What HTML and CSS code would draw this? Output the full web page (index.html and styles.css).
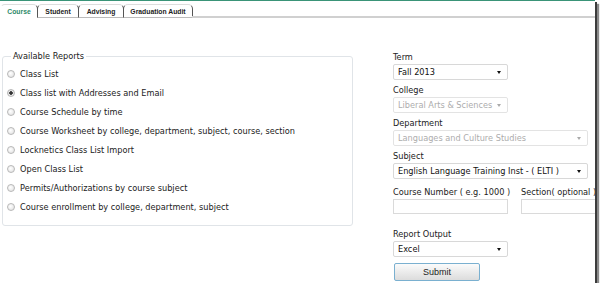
FILE: index.html
```html
<!DOCTYPE html>
<html lang="en">
<head>
    <meta charset="UTF-8">
    <title>Course Reports</title>
    <link rel="stylesheet" href="styles.css">
</head>
<body>
    <div class="frame">
        <div class="tabs">
            <div class="tab active course">Course</div>
            <div class="tab student">Student</div>
            <div class="tab advising">Advising</div>
            <div class="tab audit">Graduation Audit</div>
            <div class="tab-rest"></div>
        </div>

        <div class="content">
            <fieldset class="reports">
                <legend>Available Reports</legend>
                <label class="option"><input type="radio" name="report"> Class List</label>
                <label class="option"><input type="radio" name="report" checked> Class list with Addresses and Email</label>
                <label class="option"><input type="radio" name="report"> Course Schedule by time</label>
                <label class="option"><input type="radio" name="report"> Course Worksheet by college, department, subject, course, section</label>
                <label class="option"><input type="radio" name="report"> Locknetics Class List Import</label>
                <label class="option"><input type="radio" name="report"> Open Class List</label>
                <label class="option"><input type="radio" name="report"> Permits/Authorizations by course subject</label>
                <label class="option"><input type="radio" name="report"> Course enrollment by college, department, subject</label>
            </fieldset>

            <div class="filters">
                <div class="field">
                    <label>Term</label>
                    <span class="select short"><select><option>Fall 2013</option></select></span>
                </div>
                <div class="field">
                    <label>College</label>
                    <span class="select short disabled"><select disabled><option>Liberal Arts &amp; Sciences</option></select></span>
                </div>
                <div class="field">
                    <label>Department</label>
                    <span class="select wide disabled"><select disabled><option>Languages and Culture Studies</option></select></span>
                </div>
                <div class="field">
                    <label>Subject</label>
                    <span class="select wide"><select><option>English Language Training Inst - ( ELTI )</option></select></span>
                </div>
                <div class="field pair">
                    <div class="half">
                        <label>Course Number ( e.g. 1000 )</label>
                        <input type="text" class="text">
                    </div>
                    <div class="half">
                        <label>Section( optional )</label>
                        <input type="text" class="text">
                    </div>
                </div>
                <div class="field output">
                    <label>Report Output</label>
                    <span class="select short"><select><option>Excel</option></select></span>
                </div>
                <button class="submit">Submit</button>
            </div>
        </div>
    </div>
</body>
</html>
```

FILE: styles.css
```css
body {
    margin: 0;
    background: #fff;
    font-family: "DejaVu Sans", Verdana, sans-serif;
    font-size: 8.2px;
    color: #222;
}
.frame {
    width: 595px;
    height: 283px;
    overflow: hidden;
    background: #fff;
    border-top: 1px solid #3a9478;
    box-sizing: border-box;
    box-shadow: 2px 2px 0 #3c3c3c, 4px 4px 1px #8a8a8a;
}
.tabs {
    display: flex;
    align-items: flex-end;
    height: 17px;
    padding-top: 2px;
    box-sizing: border-box;
}
.tab {
    height: 14px;
    line-height: 14px;
    text-align: center;
    font-family: "Liberation Sans", Arial, sans-serif;
    font-weight: bold;
    font-size: 6.8px;
    color: #222;
    border: 1px solid #555;
    border-bottom: 1px solid #bbb;
    border-top-color: #ddd;
    border-radius: 5px 5px 0 0;
    margin-right: -1px;
    box-sizing: border-box;
    flex-shrink: 0;
}
.tab.course { width: 38px; }
.tab.student { width: 42px; }
.tab.advising { width: 46px; }
.tab.audit { width: 70px; }
.tab.active {
    color: #2e8a68;
    border-left-color: #fff;
    border-bottom-color: #fff;
}
.tab-rest {
    flex: 1;
    border-bottom: 2px solid #d0d0d0;
}
.content {
    display: flex;
    align-items: flex-start;
    padding: 27px 0 0 2px;
}
.reports {
    flex-shrink: 0;
    width: 351px;
    height: 175px;
    margin: 6px 0 0 0;
    padding: 3px 0 0 4px;
    border: 1px solid #e0e4e8;
    border-radius: 3px;
    box-sizing: border-box;
}
.reports legend {
    padding: 0 2px;
    margin-left: 4px;
    color: #222;
}
.option {
    display: flex;
    align-items: center;
    height: 19px;
    gap: 5px;
}
.option input {
    appearance: none;
    width: 8px;
    height: 8px;
    margin: 0;
    border: 1px solid #b8b8b8;
    border-radius: 50%;
    background: radial-gradient(circle at 40% 40%, #fff, #ddd);
    box-sizing: border-box;
}
.option input:checked {
    background: radial-gradient(circle, #333 0, #333 1.5px, #eee 2px, #ccc 100%);
}
.filters {
    flex-shrink: 0;
    margin: 7px 0 0 40px;
    display: flex;
    flex-direction: column;
}
.field {
    margin-bottom: 5px;
}
.field label {
    display: block;
    line-height: 11px;
    margin-bottom: 1px;
    white-space: nowrap;
    color: #222;
}
.select {
    position: relative;
    display: block;
    height: 16px;
}
.select.short { width: 115px; }
.select.wide { width: 195px; }
.select select {
    appearance: none;
    width: 100%;
    height: 16px;
    margin: 0;
    padding: 0 4px;
    border: 1px solid #d8d8d8;
    border-radius: 2px;
    background: #fff;
    font-family: inherit;
    font-size: 8.2px;
    color: #111;
}
.select::after {
    content: "";
    position: absolute;
    right: 7px;
    top: 7px;
    border-left: 2.5px solid transparent;
    border-right: 2.5px solid transparent;
    border-top: 3px solid #111;
}
.select.disabled select { color: #8a8a8a; }
.select.disabled::after { border-top-color: #aaa; }
.pair {
    display: flex;
    gap: 13px;
    margin-top: 3px;
}
.half { width: 115px; flex-shrink: 0; }
.text {
    display: block;
    width: 115px;
    height: 15px;
    margin: 0;
    border: 1px solid #dadada;
    box-sizing: border-box;
}
.output { margin-top: 10px; }
.submit {
    width: 86px;
    height: 18px;
    margin: 1px 0 0 1px;
    border: 1px solid #7ab0d0;
    border-radius: 2px;
    background: linear-gradient(#fbfbfb, #dcdcdc);
    font-family: "Liberation Sans", Arial, sans-serif;
    font-size: 9px;
    color: #222;
}
```
